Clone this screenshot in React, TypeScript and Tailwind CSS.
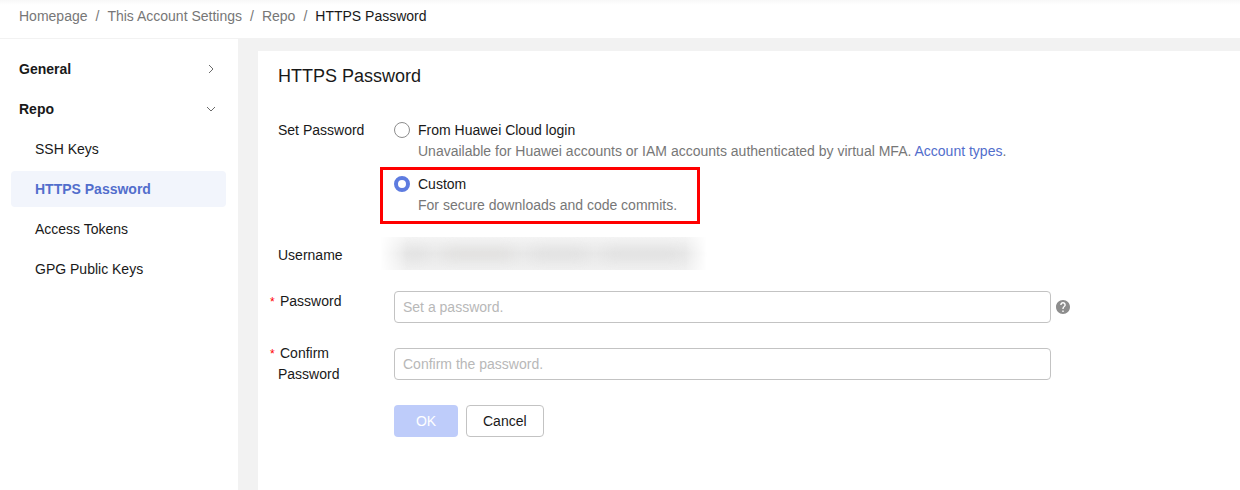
import { useState } from 'react'
import clsx from 'clsx'

const CRUMBS = ['Homepage', 'This Account Settings', 'Repo']
const REPO_ITEMS = ['SSH Keys', 'HTTPS Password', 'Access Tokens', 'GPG Public Keys']

const INPUT =
  'h-8 min-w-0 w-full max-w-[657px] rounded-[4px] border border-[#c3c3c3] bg-white px-2 leading-[21px] outline-none placeholder:text-[#b8b8b8] focus:border-[#5e7ce0]'

const RADIO =
  'mt-[2px] size-4 shrink-0 appearance-none rounded-full border border-[#8d8d8d] bg-white checked:border-4 checked:border-[#5e7ce0]'

function Chevron({ open }: { open?: boolean }) {
  return (
    <svg width="10" height="10" viewBox="0 0 10 10" fill="none" stroke="#6b6b6b" aria-hidden="true">
      <path d={open ? 'M1 3l4 4 4-4' : 'M3 1l4 4-4 4'} />
    </svg>
  )
}

function HelpIcon() {
  return (
    <svg width="14" height="14" viewBox="2 2 20 20" fill="#8d8d8d" aria-hidden="true">
      <path d="M12 2C6.48 2 2 6.48 2 12s4.48 10 10 10 10-4.48 10-10S17.52 2 12 2zm1 17h-2v-2h2v2zm2.07-7.75l-.9.92C13.45 12.9 13 13.5 13 15h-2v-.5c0-1.1.45-2.1 1.17-2.83l1.24-1.26c.37-.36.59-.86.59-1.41 0-1.1-.9-2-2-2s-2 .9-2 2H8c0-2.21 1.79-4 4-4s4 1.79 4 4c0 .88-.36 1.68-.93 2.25z" />
    </svg>
  )
}

function Required() {
  return <span className="inline-block w-[10px] indent-0 text-xs text-[#f00]">*</span>
}

function Sidebar() {
  return (
    <nav className="flex w-[238px] shrink-0 flex-col gap-1 bg-white pt-3 pr-3 pl-[11px]">
      <button className="flex h-9 items-center justify-between px-2 pr-[10px] font-bold">
        General
        <Chevron />
      </button>
      <button className="flex h-9 items-center justify-between px-2 pr-[10px] font-bold">
        Repo
        <Chevron open />
      </button>
      {REPO_ITEMS.map((item) => (
        <a
          key={item}
          href="#"
          className={clsx(
            'flex h-9 items-center rounded-[4px] pl-6',
            item === 'HTTPS Password' && 'bg-[#f2f5fc] font-bold text-[#526ecc]',
          )}
        >
          {item}
        </a>
      ))}
    </nav>
  )
}

export default function App() {
  const [mode, setMode] = useState('custom')

  return (
    <div className="flex min-h-screen flex-col bg-[#f2f2f2] font-['Liberation_Sans',Arial,sans-serif] text-sm leading-[21px] text-[#191919]">
      {/* Breadcrumb */}
      <header className="h-[39px] border-b border-[#f2f2f2] bg-white bg-linear-to-b from-[#f8f8f8] to-white to-[5px] px-[19px] pt-[6px]">
        <nav className="flex gap-2 whitespace-nowrap text-[#777]">
          {CRUMBS.map((c) => (
            <span key={c} className="flex gap-2">
              <a href="#">{c}</a>
              <span>/</span>
            </span>
          ))}
          <span className="text-[#191919]">HTTPS Password</span>
        </nav>
      </header>

      <div className="flex flex-1">
        <Sidebar />

        <main className="mt-3 ml-5 min-w-0 flex-1 bg-white px-5 pt-3">
          <h1 className="text-lg leading-[26px]">HTTPS Password</h1>

          <form className="mt-[31px]" onSubmit={(e) => e.preventDefault()}>
            <div className="flex" role="radiogroup" aria-labelledby="mode-label">
              <span id="mode-label" className="w-[116px] shrink-0">Set Password</span>
              <div className="flex flex-col gap-3">
                <div className="flex gap-2">
                  <input
                    id="mode-login"
                    type="radio"
                    name="mode"
                    className={RADIO}
                    checked={mode === 'login'}
                    onChange={() => setMode('login')}
                  />
                  <div>
                    <label htmlFor="mode-login" className="block">From Huawei Cloud login</label>
                    <p className="text-[#777]">
                      Unavailable for Huawei accounts or IAM accounts authenticated by virtual MFA.{' '}
                      <a href="#" className="text-[#526ecc]">Account types</a>.
                    </p>
                  </div>
                </div>
                <div className="relative flex gap-2 self-start">
                  <input
                    id="mode-custom"
                    type="radio"
                    name="mode"
                    className={RADIO}
                    checked={mode === 'custom'}
                    onChange={() => setMode('custom')}
                  />
                  <div>
                    <label htmlFor="mode-custom" className="block">Custom</label>
                    <p className="text-[#777]">For secure downloads and code commits.</p>
                  </div>
                  {/* Highlight frame */}
                  <div className="pointer-events-none absolute -top-[7px] -left-[14px] h-[57px] w-[320px] border-3 border-[#f00]" />
                </div>
              </div>
            </div>

            {/* Username, value masked */}
            <div className="mt-[21px] flex h-[33px] items-center">
              <span className="w-[97px] shrink-0 pt-1">Username</span>
              <div className="flex h-[33px] w-[336px] items-center bg-linear-to-b from-[#f4f4f4] via-[#e8e8e8] to-[#f0f0f0] px-8 mask-[linear-gradient(to_right,transparent_5px,#000_32px,#000_310px,transparent_332px)]">
                <div className="flex h-2 flex-1 gap-6 blur-[6px]">
                  <div className="w-4 bg-[#dfdfdf]" />
                  <div className="w-16 bg-[#dfdedc]" />
                  <div className="w-12 bg-[#dfdfdf]" />
                  <div className="flex-1 bg-[#dfdfdf]" />
                </div>
              </div>
            </div>

            <div className="mt-[21px] flex items-start">
              <label htmlFor="password" className="w-[116px] shrink-0 pr-4 -indent-2">
                <Required />
                Password
              </label>
              <div className="flex min-w-0 flex-1 items-center gap-[5px]">
                <input id="password" type="password" placeholder="Set a password." className={INPUT} />
                <button type="button" aria-label="Password help">
                  <HelpIcon />
                </button>
              </div>
            </div>

            <div className="mt-5 flex items-center">
              <label htmlFor="confirm" className="w-[116px] shrink-0 pr-4 -indent-2">
                <Required />
                Confirm Password
              </label>
              <div className="flex min-w-0 flex-1">
                <input id="confirm" type="password" placeholder="Confirm the password." className={INPUT} />
              </div>
            </div>

            <div className="mt-5 ml-[116px] flex gap-2">
              <button type="submit" disabled className="h-8 w-16 rounded-[4px] bg-[#beccfa] text-white">
                OK
              </button>
              <button type="button" className="h-8 rounded-[4px] border border-[#c3c3c3] px-4">
                Cancel
              </button>
            </div>
          </form>
        </main>
      </div>
    </div>
  )
}
